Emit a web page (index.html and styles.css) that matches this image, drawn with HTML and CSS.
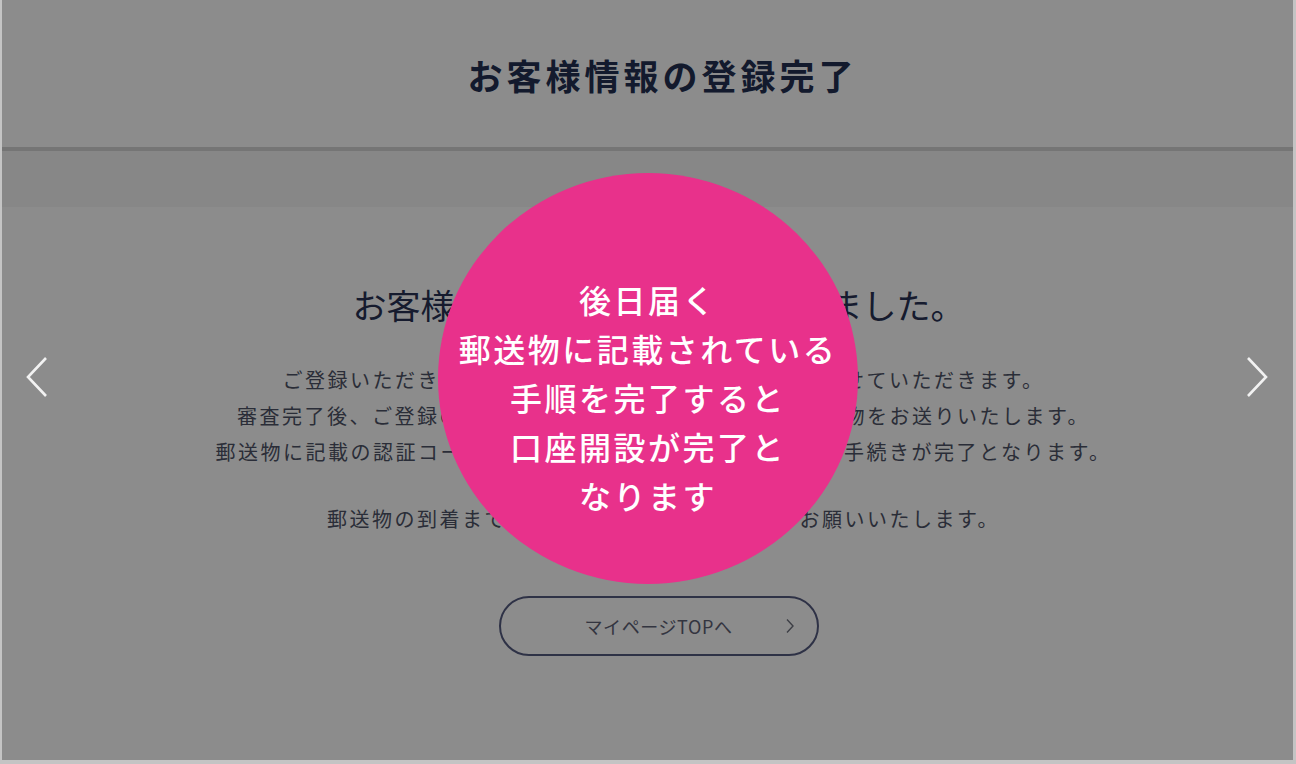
FILE: index.html
```html
<!DOCTYPE html>
<html lang="ja">
<head>
<meta charset="utf-8">
<title>お客様情報の登録完了</title>
<link rel="stylesheet" href="styles.css">
</head>
<body>
<div class="frame">
  <header class="page-header">
    <h1 class="page-title">お客様情報の登録完了</h1>
  </header>
  <div class="band"></div>
  <main class="content">
    <h2 class="lead">お客様情報のご登録を受け付けました。</h2>
    <p class="text">ご登録いただきました内容をもとに、当社にて審査をさせていただきます。<br>審査完了後、ご登録のご住所宛に認証コードを記載した郵送物をお送りいたします。<br>郵送物に記載の認証コードを入力いただくことで、口座開設の手続きが完了となります。</p>
    <p class="text">郵送物の到着までしばらくお待ちいただくようお願いいたします。</p>
    <div class="btn-row">
      <a class="btn">マイページTOPへ
        <svg class="btn-chev" width="10" height="16" viewBox="0 0 10 16"><path d="M2 1.5 L8 8 L2 14.5" fill="none" stroke="currentColor" stroke-width="1.4"/></svg>
      </a>
    </div>
  </main>
  <div class="overlay">
    <button class="nav nav-prev" aria-label="前へ">
      <svg width="26" height="42" viewBox="0 0 26 42"><path d="M22 2 L4 21 L22 40" fill="none" stroke="#f2f2f2" stroke-width="2.6"/></svg>
    </button>
    <div class="bubble">
      <p class="bubble-text">後日届く<br>郵送物に記載されている<br>手順を完了すると<br>口座開設が完了と<br>なります</p>
    </div>
    <button class="nav nav-next" aria-label="次へ">
      <svg width="26" height="42" viewBox="0 0 26 42"><path d="M4 2 L22 21 L4 40" fill="none" stroke="#f2f2f2" stroke-width="2.6"/></svg>
    </button>
  </div>
</div>
</body>
</html>
```
FILE: styles.css
```css
html, body {
  margin: 0;
  padding: 0;
}
body {
  background: #c4c4c4;
  font-family: "Noto Sans CJK JP", "Noto Sans", sans-serif;
  width: 1296px;
  height: 764px;
  overflow: hidden;
}
.frame {
  position: relative;
  margin: 0 3px 0 2px;
  height: 760px;
  background: #ffffff;
  overflow: hidden;
}
.page-header {
  height: 147px;
  display: flex;
  align-items: center;
  justify-content: center;
  padding-left: 30px;
  border-bottom: 4px solid #d6d6d6;
  box-sizing: content-box;
}
.page-title {
  margin: 0;
  font-size: 35px;
  font-weight: 700;
  letter-spacing: 4px;
  color: #243052;
  padding-top: 2px;
}
.band {
  height: 56px;
  background: #f6f6f6;
}
.content {
  display: flex;
  flex-direction: column;
  align-items: center;
  padding-left: 22px;
}
.lead {
  margin: 73px 0 0;
  font-size: 34px;
  font-weight: 400;
  line-height: 50px;
  color: #283255;
}
.text {
  margin: 32px 0 0;
  padding-left: 10px;
  font-size: 20px;
  line-height: 36px;
  letter-spacing: 2.5px;
  text-align: center;
  color: #4e5366;
}
.text + .text {
  margin-top: 31px;
}
.btn-row {
  margin-top: 59px;
  display: flex;
  justify-content: center;
  padding-left: 0;
}
.btn {
  position: relative;
  width: 320px;
  height: 60px;
  box-sizing: border-box;
  border: 2px solid #555b80;
  border-radius: 30px;
  display: flex;
  align-items: center;
  justify-content: center;
  font-size: 18px;
  letter-spacing: 0.6px;
  color: #5e6176;
}
.btn-chev {
  position: absolute;
  right: 22px;
  top: 20px;
  color: #70737f;
}
.overlay {
  position: absolute;
  inset: 0;
  background: rgba(0, 0, 0, 0.45);
}
.bubble {
  position: absolute;
  left: 436px;
  top: 173px;
  width: 420px;
  height: 411px;
  border-radius: 50%;
  background: #e8318b;
  display: flex;
  align-items: center;
  justify-content: center;
  padding-top: 38px;
  box-sizing: border-box;
}
.bubble-text {
  margin: 0;
  color: #ffffff;
  font-size: 32px;
  font-weight: 500;
  letter-spacing: 2.5px;
  line-height: 49px;
  text-align: center;
}
.nav {
  position: absolute;
  top: 356px;
  padding: 0;
  border: 0;
  background: none;
  width: 26px;
  height: 42px;
}
.nav-prev {
  left: 22px;
}
.nav-next {
  right: 23px;
}
```
